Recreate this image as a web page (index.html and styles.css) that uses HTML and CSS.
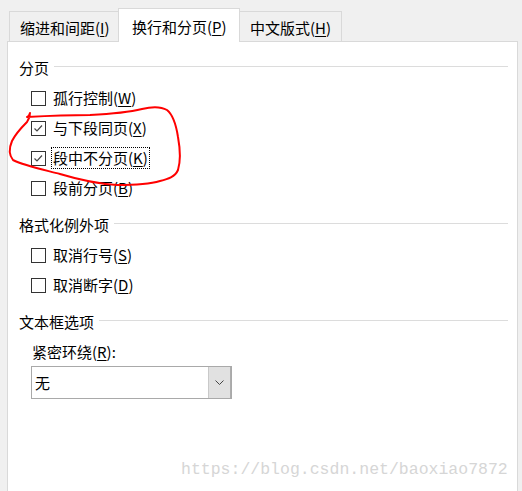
FILE: index.html
```html
<!DOCTYPE html>
<html lang="zh-CN">
<head>
<meta charset="utf-8">
<title>段落</title>
<link rel="stylesheet" href="styles.css">
</head>
<body>
<div class="dialog">
  <div class="tabs">
    <div class="tab">缩进和间距(<u>I</u>)</div>
    <div class="tab active">换行和分页(<u>P</u>)</div>
    <div class="tab">中文版式(<u>H</u>)</div>
  </div>
  <div class="panel">
    <section class="group">
      <div class="heading"><span>分页</span></div>
      <label class="row"><span class="box"></span><span class="text">孤行控制(<u>W</u>)</span></label>
      <label class="row"><span class="box checked"><svg viewBox="0 0 13 13" width="13" height="13"><polyline points="2.5,6.5 5,9 10,3.5" fill="none" stroke="#444" stroke-width="1.2"/></svg></span><span class="text">与下段同页(<u>X</u>)</span></label>
      <label class="row"><span class="box checked"><svg viewBox="0 0 13 13" width="13" height="13"><polyline points="2.5,6.5 5,9 10,3.5" fill="none" stroke="#444" stroke-width="1.2"/></svg></span><span class="text focus">段中不分页(<u>K</u>)</span></label>
      <label class="row"><span class="box"></span><span class="text">段前分页(<u>B</u>)</span></label>
    </section>
    <section class="group">
      <div class="heading"><span>格式化例外项</span></div>
      <label class="row"><span class="box"></span><span class="text">取消行号(<u>S</u>)</span></label>
      <label class="row"><span class="box"></span><span class="text">取消断字(<u>D</u>)</span></label>
    </section>
    <section class="group">
      <div class="heading"><span>文本框选项</span></div>
      <div class="field-label">紧密环绕(<u>R</u>):</div>
      <div class="select">
        <span class="value">无</span>
        <span class="drop"><svg viewBox="0 0 9 5" width="9" height="5"><polyline points="0.5,0.5 4.5,4.5 8.5,0.5" fill="none" stroke="#444" stroke-width="1"/></svg></span>
      </div>
    </section>
  </div>
  <svg class="scribble" width="522" height="491" viewBox="0 0 522 491">
    <path d="M30,113 C29,116 28,117 27,117 C45,116 70,115 90,115 C110,114 130,112 142,109 C150,107 160,106 167,110 C172,114 176,124 178,137 C180,148 181,160 178,170 C175,177 168,179 160,181 C150,184 135,185 117,185 C100,184 80,180 60,174 C45,170 25,166 13,160 C9,155 9,148 12,141 C16,133 22,127 27,122 C29,119 30,116 30,113" fill="none" stroke="#f00" stroke-width="2" stroke-linecap="round" stroke-linejoin="round"/>
  </svg>
  <div class="watermark">https://blog.csdn.net/baoxiao7872</div>
</div>
</body>
</html>
```

FILE: styles.css
```css
html, body {
  margin: 0;
  padding: 0;
  background: #f0f0f0;
}
body {
  width: 522px;
  height: 491px;
  overflow: hidden;
  font-family: "Noto Sans CJK SC", "Noto Sans", sans-serif;
  font-size: 15px;
  color: #000;
}
u {
  text-decoration: underline;
  text-underline-offset: 2px;
}
.dialog {
  position: relative;
  width: 522px;
  height: 491px;
  padding-top: 8px;
  box-sizing: border-box;
}
.tabs {
  display: flex;
  align-items: flex-end;
  height: 33px;
  margin-left: 9px;
  position: relative;
  z-index: 2;
}
.tab {
  height: 30px;
  box-sizing: border-box;
  border: 1px solid #d9d9d9;
  border-bottom: none;
  background: #f0f0f0;
  padding: 5px 0 0 10px;
  line-height: 22px;
  white-space: nowrap;
  margin-right: -1px;
}
.tab:first-child {
  width: 110px;
}
.tab.active {
  height: 34px;
  margin-bottom: -1px;
  background: #fff;
  width: 122px;
  padding: 7px 0 0 13px;
  position: relative;
  z-index: 3;
}
.tab:last-child {
  width: 103px;
}
.panel {
  margin-left: 7px;
  width: 511px;
  height: 460px;
  box-sizing: border-box;
  border: 1px solid #d9d9d9;
  background: #fff;
  padding: 11px 9px 0 11px;
}
.group + .group {
  margin-top: 7px;
}
.heading {
  display: flex;
  align-items: center;
  height: 30px;
  line-height: 20px;
}
.heading::after {
  content: "";
  flex: 1;
  height: 1px;
  background: #dcdcdc;
  margin-left: 5px;
  transform: translateY(-2px);
}
.row {
  display: flex;
  align-items: center;
  height: 30px;
  padding-left: 12px;
  line-height: 20px;
}
.box {
  width: 13px;
  height: 13px;
  border: 1px solid #333;
  box-sizing: content-box;
  background: #fff;
  margin-right: 7px;
  flex: none;
}
.box svg {
  display: block;
}
.text {
  padding: 0 1px;
  border: 1px dotted transparent;
  margin-left: -2px;
}
.text.focus {
  border-color: #000;
}
.field-label {
  height: 29px;
  line-height: 29px;
  padding-left: 13px;
}
.select {
  margin-left: 12px;
  width: 201px;
  height: 33px;
  box-sizing: border-box;
  border: 1px solid #a9a9a9;
  display: flex;
  background: #fff;
}
.value {
  flex: 1;
  padding-left: 3px;
  display: flex;
  align-items: center;
}
.drop {
  width: 21px;
  background: #e1e1e1;
  border-left: 1px solid #c9c9c9;
  border-right: 1px solid #adadad;
  display: flex;
  align-items: center;
  justify-content: center;
}
.drop svg {
  display: block;
}
.scribble {
  position: absolute;
  left: 0;
  top: 0;
  pointer-events: none;
  z-index: 5;
}
.watermark {
  position: absolute;
  left: 181px;
  top: 460px;
  font-family: "Liberation Mono", monospace;
  font-size: 16.5px;
  color: #d6d6d6;
  white-space: nowrap;
  z-index: 4;
}
```
